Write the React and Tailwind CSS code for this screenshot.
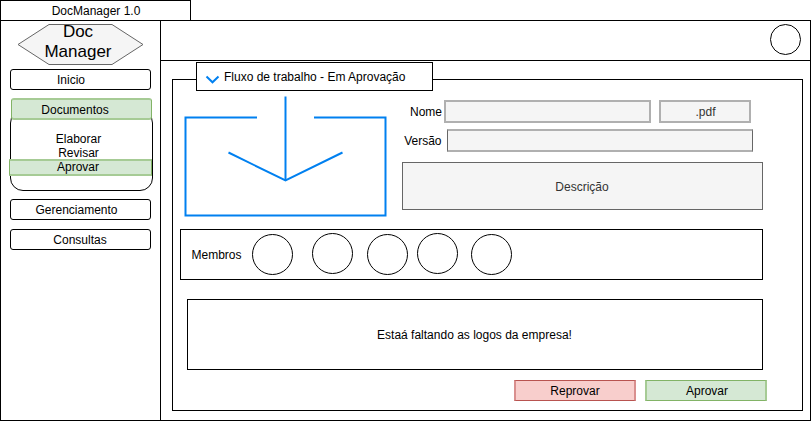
const members = [
  { id: 1, place: "ml-[9.5px] mt-[4px]" },
  { id: 2, place: "ml-[19px] mt-[3px]" },
  { id: 3, place: "ml-[14px] mt-[4px]" },
  { id: 4, place: "ml-[9px] mt-[3px]" },
  { id: 5, place: "ml-[13px] mt-[4px]" },
];

function Circle({ size, className }) {
  return (
    <svg width={size} height={size} className={`shrink-0 ${className}`}>
      <circle cx={size / 2} cy={size / 2} r={size / 2 - 0.5} fill="#fff" stroke="#000" />
    </svg>
  );
}

function MenuItem({ label, className }) {
  return (
    <button className={`ml-[9px] block h-[21px] w-[141px] rounded-[3px] border border-black bg-white text-center leading-[20px] ${className}`}>
      {label}
    </button>
  );
}

function Sidebar() {
  return (
    <aside className="flex w-[160px] shrink-0 flex-col border-r border-black">
      <div className="relative ml-[16px] mt-[2px] h-[43px] w-[128px] shrink-0">
        <svg width="128" height="43" className="absolute inset-0">
          <polygon points="1,21.5 32,1.5 95,1.5 126,21.5 95,41.5 32,41.5" fill="#f5f5f5" stroke="#666" />
        </svg>
        <h1 className="relative -mt-[1px] w-[122px] text-center text-[17px] leading-[20px]">
          Doc
          <br />
          Manager
        </h1>
      </div>
      <MenuItem label="Inicio" className="mt-[3px] pr-[19px]" />
      <button className="relative z-10 ml-[10px] mt-[8px] block h-[22px] w-[141px] shrink-0 rounded-[3px] border-x border-y-2 border-x-[#82b366] border-y-[#a6cb95] bg-[#d5e8d4] pr-[13px] text-center leading-[20px]">
        Documentos
      </button>
      <div className="-mt-[10px] ml-[9px] h-[81px] w-[143px] shrink-0 rounded-[13px] border border-black pt-[21px] text-center leading-[14px]">
        <div className="pr-[6px]">Elaborar</div>
        <div className="pr-[6px]">Revisar</div>
        <div className="-ml-[2px] -mt-[1px] h-[17px] w-[143px] border-x border-y-2 border-x-[#82b366] border-y-[#a6cb95] bg-[#d5e8d4] pr-[5px] leading-[13px]">Aprovar</div>
      </div>
      <MenuItem label="Gerenciamento" className="mt-[8px] pr-[8px]" />
      <MenuItem label="Consultas" className="mt-[9px] pr-[1px]" />
    </aside>
  );
}

function DownloadDrawing() {
  return (
    <svg width="206" height="123" className="shrink-0" fill="none" stroke="#0080f0" strokeWidth="2">
      <path d="M74 22.5H2.5V120.5H202.5V22.5H131" />
      <path d="M102.5 1.5V85.5" />
      <path d="M45.5 57.5L102.5 85.5L159.5 57.5" />
    </svg>
  );
}

function DocumentForm() {
  return (
    <div className="ml-[13px] mt-[5px] w-[361px]">
      <div className="flex h-[23px]">
        <label className="w-[42px] pr-[2px] text-right leading-[25px]">Nome</label>
        <div className="h-[23px] w-[207px] border-2 border-[#b0b0b0] bg-[#f5f5f5]" />
        <div className="ml-[8px] h-[23px] w-[92px] border-2 border-[#b0b0b0] bg-[#f5f5f5] pl-[1px] text-center leading-[21px] text-[#333]">.pdf</div>
      </div>
      <div className="mt-[6px] flex h-[23px]">
        <label className="w-[45px] pr-[5.5px] text-right leading-[25px]">Versão</label>
        <div className="h-[23px] w-[306px] border-x border-y-2 border-x-[#666] border-y-[#b0b0b0] bg-[#f5f5f5]" />
      </div>
      <div className="mt-[10px] h-[48px] border border-[#666] bg-[#f5f5f5] pr-[1px] text-center leading-[48px] text-[#333]">Descrição</div>
    </div>
  );
}

export default function App() {
  return (
    <div className="h-[421px] w-[811px] overflow-hidden bg-white font-['Liberation_Sans',Arial,sans-serif] text-[12px] text-black">
      <div className="h-[20px] w-[191px] border-x border-t border-black pl-[1px] text-center leading-[21px]">DocManager 1.0</div>
      <div className="flex h-[401px] border border-black">
        <Sidebar />
        <div className="flex-1">
          <header className="flex h-[40px] justify-end border-b border-black pr-[9px]">
            <Circle size={31} className="mt-[3px]" />
          </header>
          <main className="relative ml-[11px] mt-[18px] h-[332px] w-[631px] border border-black">
            <div className="absolute -top-[18px] left-[23px] flex h-[29px] w-[237px] border border-black bg-white">
              <svg width="15" height="10" className="ml-[8px] mt-[12px]" fill="none" stroke="#0080f0" strokeWidth="2">
                <path d="M1.5 1.5L7.5 7.3L13.5 1.5" />
              </svg>
              <span className="ml-[4px] leading-[28px]">Fluxo de trabalho - Em Aprovação</span>
            </div>
            <section className="ml-[10px] mt-[15px] flex h-[123px]">
              <DownloadDrawing />
              <DocumentForm />
            </section>
            <section className="ml-[7px] mt-[11px] flex h-[51px] w-[583px] border border-black">
              <span className="ml-[10.5px] w-[51px] leading-[50px]">Membros</span>
              {members.map((m) => (
                <Circle key={m.id} size={41} className={m.place} />
              ))}
            </section>
            <section className="ml-[14px] mt-[19px] h-[71px] w-[576px] border border-black pr-[1px] text-center leading-[70px]">
              Estaá faltando as logos da empresa!
            </section>
            <div className="ml-[341px] mt-[10px] flex gap-[9px] text-center leading-[20px]">
              <button className="h-[21px] w-[122px] border-x-2 border-y border-x-[#d98f8e] border-y-[#b85450] bg-[#f8cecc]">Reprovar</button>
              <button className="h-[21px] w-[122px] border-x-2 border-y border-x-[#a6cb95] border-y-[#82b366] bg-[#d5e8d4] pl-[2px]">Aprovar</button>
            </div>
          </main>
        </div>
      </div>
    </div>
  );
}
